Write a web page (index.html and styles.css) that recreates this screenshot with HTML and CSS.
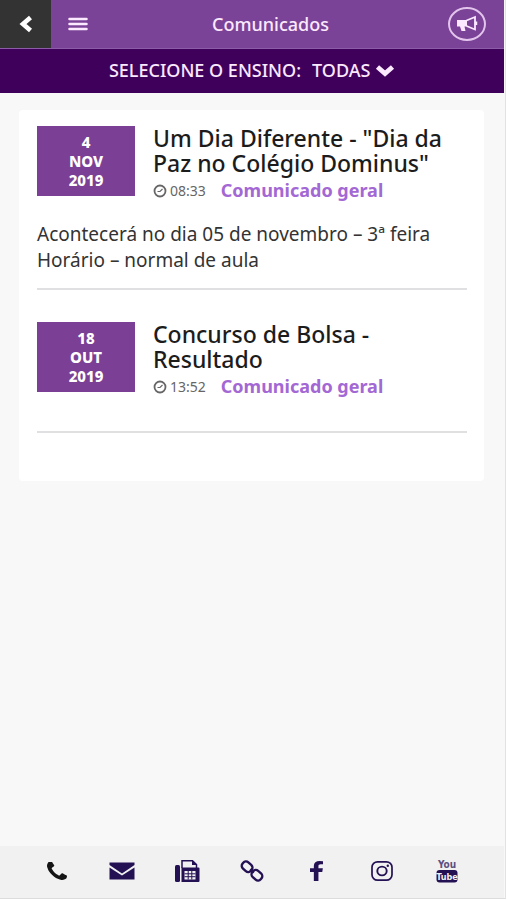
FILE: index.html
```html
<!DOCTYPE html>
<html lang="pt-BR">
<head>
<meta charset="utf-8">
<meta name="viewport" content="width=device-width, initial-scale=1">
<title>Comunicados</title>
<link rel="stylesheet" href="styles.css">
</head>
<body>
<div class="app">
  <header class="topbar">
    <button class="back" type="button" aria-label="Voltar">
      <svg width="14" height="18" viewBox="0 0 14 18"><path d="M11.500 2.500L4 9l7.500 6.500" fill="none" stroke="currentColor" stroke-width="4.600"/></svg>
    </button>
    <button class="menu" type="button" aria-label="Menu">
      <svg width="20" height="14" viewBox="0 0 20 14"><path d="M1.500 2h17M1.500 7h17M1.500 12h17" stroke="currentColor" stroke-width="2.500" stroke-linecap="round"/></svg>
    </button>
    <h1 class="title">Comunicados</h1>
    <button class="announce" type="button" aria-label="Avisos">
      <svg width="22" height="18" viewBox="0 0 22 18"><path d="M1 5h10v6.500H8.500l1 4.500H5.500L4 11.500H1z" fill="currentColor"/><path d="M10.500 5.500L19 2v12.500l-8.500-3.500" fill="none" stroke="currentColor" stroke-width="1.800"/><path d="M20 6.500v3.500" stroke="currentColor" stroke-width="2.500"/></svg>
    </button>
  </header>
  <div class="filter">
    <label for="ensino">SELECIONE O ENSINO:</label>
    <select id="ensino"><option>TODAS</option></select>
    <svg width="20" height="13" viewBox="0 0 20 13"><path d="M2.500 3L10 9.500 17.500 3" fill="none" stroke="currentColor" stroke-width="4.800"/></svg>
  </div>
  <main class="content">
    <div class="card">
      <article class="notice">
        <div class="head">
          <time class="date" datetime="2019-11-04"><span>4</span><span>NOV</span><span>2019</span></time>
          <div class="info">
            <h2>Um Dia Diferente - "Dia da Paz no Colégio Dominus"</h2>
            <div class="meta">
              <svg width="14" height="14" viewBox="0 0 14 14"><circle cx="7" cy="7" r="5.500" fill="none" stroke="currentColor" stroke-width="1.800"/><path d="M9.500 5L7 7.500H4.500" fill="none" stroke="currentColor" stroke-width="1.200"/></svg>
              <span class="hour">08:33</span>
              <strong>Comunicado geral</strong>
            </div>
          </div>
        </div>
        <p class="text">Acontecerá no dia 05 de novembro – 3ª feira<br>Horário – normal de aula</p>
      </article>
      <article class="notice">
        <div class="head">
          <time class="date" datetime="2019-10-18"><span>18</span><span>OUT</span><span>2019</span></time>
          <div class="info">
            <h2>Concurso de Bolsa - Resultado</h2>
            <div class="meta">
              <svg width="14" height="14" viewBox="0 0 14 14"><circle cx="7" cy="7" r="5.500" fill="none" stroke="currentColor" stroke-width="1.800"/><path d="M9.500 5L7 7.500H4.500" fill="none" stroke="currentColor" stroke-width="1.200"/></svg>
              <span class="hour">13:52</span>
              <strong>Comunicado geral</strong>
            </div>
          </div>
        </div>
      </article>
    </div>
  </main>
  <nav class="contacts">
    <a class="phone" href="#telefone" aria-label="Telefone">
      <svg width="20" height="18" viewBox="192 192 1408 1344" preserveAspectRatio="none"><path fill="currentColor" d="M1600 1240q0 27-10 70.500t-21 68.500q-21 50-122 106-94 51-186 51-27 0-53-3.500t-57.500-12.500-47-14.500-55.500-20.500-49-18q-98-35-175-83-127-79-264-216t-216-264q-48-77-83-175-3-9-18-49t-20.500-55.500-14.500-47-12.500-57.500-3.500-53q0-92 51-186 56-101 106-122 25-11 68.500-21t70.500-10q14 0 21 3 18 6 53 76 11 19 30 54t35 63.500 31 53.500q3 4 17.500 25t21.500 35.500 7 28.500q0 20-28.500 50t-62 55-62 53-28.500 46q0 9 5 22.500t8.500 20.500 14 24 11.500 19q76 137 174 235t235 174q2 1 19 11.500t24 14 20.500 8.500 22.500 5q18 0 46-28.500t53-62 55-62 50-28.500q14 0 28.500 7t35.500 21.500 25 17.500q25 15 53.500 31t63.500 35 54 30q70 35 76 53 3 7 3 21z"/></svg>
    </a>
    <a href="#email" aria-label="E-mail">
      <svg width="26" height="18" viewBox="0 0 26 18"><path fill="currentColor" d="M.5 .5h25V3L13 11.500.5 3zM.5 5.500L13 13.500l12.500-8v12H.5z"/></svg>
    </a>
    <a href="#fax" aria-label="Fax">
      <svg width="26" height="24" viewBox="0 0 26 24"><rect x="1" y="6" width="5" height="17" rx="1.500" fill="currentColor"/><path d="M8 9V1.700h10.500l4 3.800V9" fill="none" stroke="currentColor" stroke-width="1.500"/><path d="M18 1v5h5z" fill="currentColor"/><path fill="currentColor" fill-rule="evenodd" d="M7.500 8.500h17q1 0 1 1V22q0 1-1 1h-17zM10.500 12v8.500h11V12z"/><path d="M10.500 14.800h11M10.500 17.700h11M14.200 12v8.500M17.800 12v8.500" stroke="currentColor"/></svg>
    </a>
    <a href="#site" aria-label="Site">
      <svg width="24" height="22" viewBox="0 0 24 22"><g transform="rotate(41 12 11)" fill="none" stroke="currentColor" stroke-width="2.400"><rect x="0" y="6.900" width="11" height="8.200" rx="3.600"/><rect x="13" y="6.900" width="11" height="8.200" rx="3.600"/><path d="M9.500 11h5"/></g></svg>
    </a>
    <a href="#facebook" aria-label="Facebook">
      <svg width="13" height="20" viewBox="479 0 864 1664" preserveAspectRatio="none"><path fill="currentColor" d="M1343 12v264h-157q-86 0-116 36t-30 108v189h293l-39 296h-254v759h-306v-759h-255v-296h255v-218q0-186 104-288.500t277-102.500q147 0 228 12z"/></svg>
    </a>
    <a href="#instagram" aria-label="Instagram">
      <svg width="24" height="22" viewBox="0 0 24 22"><rect x="2" y="1.800" width="20" height="18.400" rx="5.500" fill="none" stroke="currentColor" stroke-width="1.700"/><ellipse cx="12" cy="11" rx="4.700" ry="4.400" fill="none" stroke="currentColor" stroke-width="1.900"/><circle cx="17.800" cy="5.800" r="1.200" fill="currentColor"/></svg>
    </a>
    <a href="#youtube" aria-label="YouTube">
      <svg class="tube" width="24" height="24" viewBox="0 0 24 24"><text x="12" y="9" class="you">You</text><rect x="1.500" y="11" width="21" height="12.500" rx="3" fill="currentColor"/><text x="12" y="21" class="tubetext">Tube</text></svg>
    </a>
  </nav>
</div>
</body>
</html>
```
FILE: styles.css
```css
* { box-sizing: border-box; }
body {
  margin: 0;
  background: #fff;
  color: #222;
  font-family: "Noto Sans", "Open Sans", sans-serif;
}
svg { display: block; flex: none; }
button { border: 0; padding: 0; background: none; color: inherit; font: inherit; }
.app {
  display: flex;
  flex-direction: column;
  min-height: calc(100vh - 1px);
  margin-right: 1px;
  padding-right: 1px;
  background: #f8f8f8;
  border-right: 1px solid #e2e2e4;
  border-bottom: 1px solid #dcdcdc;
}
.topbar {
  display: grid;
  grid-template-columns: 51px 54px 1fr 74px;
  height: 49px;
  background: #7b4397;
  border-bottom: 1px solid #8d5ca8;
  color: #fbe9ff;
}
.back, .menu { display: flex; align-items: center; justify-content: center; }
.back { background: #333; color: #fff; }
.title {
  margin: 0;
  padding-left: 6px;
  text-align: center;
  font-size: 18px;
  font-weight: 500;
  line-height: 48px;
}
.announce {
  display: flex;
  align-items: center;
  justify-content: center;
  place-self: center;
  width: 38px;
  height: 34px;
  border: 2px solid #e3c4ec;
  border-radius: 50%;
}
.filter {
  display: flex;
  align-items: center;
  justify-content: center;
  height: 44px;
  padding-bottom: 2px;
  background: #3f005c;
  color: #fbe9ff;
  font-size: 18px;
  font-weight: 500;
}
.filter select {
  appearance: none;
  margin: 0 4px 0 11px;
  padding: 0;
  border: 0;
  background: none;
  color: inherit;
  font: inherit;
}
.content { flex: 1; padding: 17px 20px 17px 19px; }
.card {
  padding: 16px 17px 48px 18px;
  background: #fff;
  border-radius: 4px;
}
.notice { padding-bottom: 15px; border-bottom: 2px solid #e0e0e2; }
.notice + .notice { margin-top: 32px; padding-bottom: 31px; }
.head { display: flex; gap: 18px; align-items: flex-start; }
.date {
  display: flex;
  flex-direction: column;
  flex: none;
  width: 98px;
  padding: 7px 0 6px;
  background: #7b4095;
  color: #fff;
  text-align: center;
  font-size: 15px;
  font-weight: 800;
  line-height: 19px;
}
.info { flex: 1; }
h2 { margin: 0; font-size: 23px; font-weight: 500; line-height: 25px; color: #1c1c1c; }
.meta {
  display: flex;
  align-items: center;
  height: 28px;
  padding-top: 1px;
  color: #666;
  font-size: 14px;
}
.hour { margin: 0 15px 0 3px; }
.meta strong { color: #a368d4; font-size: 18px; line-height: 25px; }
.text { margin: 17px 0 0; font-size: 19px; line-height: 26px; color: #333; }
.contacts {
  display: flex;
  height: 52px;
  padding: 0 25px 2px;
  background: #f1f1f1;
}
.contacts a {
  display: flex;
  flex: 1;
  align-items: center;
  justify-content: center;
  color: #241154;
}
.contacts .phone { color: #151515; }
.tube text { font-family: "Liberation Sans Narrow", "DejaVu Sans Condensed", sans-serif; font-weight: 700; text-anchor: middle; }
.you { font-size: 10px; fill: #5c5080; }
.tubetext { font-size: 9px; fill: #f1f1f1; }
```
